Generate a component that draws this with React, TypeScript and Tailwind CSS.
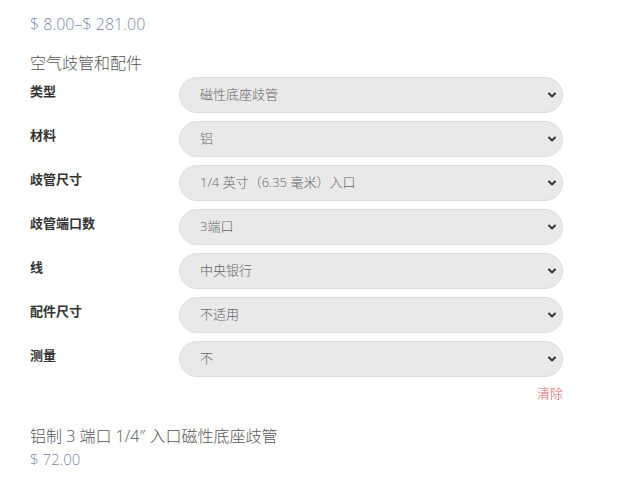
import React from 'react';

const font = { fontFamily: '"Open Sans", "Noto Sans CJK SC", sans-serif' };

const rows = [
  { label: '类型', value: '磁性底座歧管' },
  { label: '材料', value: '铝' },
  { label: '歧管尺寸', value: '1/4 英寸（6.35 毫米）入口' },
  { label: '歧管端口数', value: '3端口' },
  { label: '线', value: '中央银行' },
  { label: '配件尺寸', value: '不适用' },
  { label: '测量', value: '不' },
];

const Chevron = () => (
  <svg
    className="pointer-events-none absolute right-[6px] top-1/2 -translate-y-1/2"
    width="10"
    height="10"
    viewBox="0 0 10 10"
  >
    <path d="M2 3.5 L5 6.5 L8 3.5" fill="none" stroke="#333" strokeWidth="2" strokeLinecap="round" strokeLinejoin="round" />
  </svg>
);

const VariationRow = ({ label, value }: { label: string; value: string }) => (
  <div className="flex items-start">
    <div className="w-[149px] pt-[5px] text-[13px] font-bold leading-[18px] text-[#333]">{label}</div>
    <div className="relative w-[384px]">
      <select
        defaultValue={value}
        style={font}
        className="h-[36px] w-full appearance-none rounded-full border border-[#dcdcdc] bg-[#e9e9e9] pl-[20px] pr-[30px] text-[13px] font-light text-[#666] outline-none"
      >
        <option value={value}>{value}</option>
      </select>
      <Chevron />
    </div>
  </div>
);

export default function App() {
  return (
    <div style={font} className="min-h-[481px] w-[623px] bg-white pl-[30px] pt-[13px]">
      <div className="text-[16px] font-light leading-[22px] text-[#7a87a6]">$ 8.00–$ 281.00</div>
      <div className="mt-[18px] text-[16px] font-light leading-[20px] text-[#555]">空气歧管和配件</div>
      <div className="mt-[4px] flex flex-col gap-[8px]">
        {rows.map((r) => (
          <VariationRow key={r.label} label={r.label} value={r.value} />
        ))}
      </div>
      <div className="flex w-[533px] justify-end pt-[7px]">
        <span className="text-[13px] font-light leading-[18px] text-[#dd5a58]">清除</span>
      </div>
      <div className="mt-[23px] text-[16px] font-light leading-[22px] text-[#555]">铝制 3 端口 1/4″ 入口磁性底座歧管</div>
      <div className="mt-[2px] text-[15px] font-light leading-[20px] text-[#7a87a6]">$ 72.00</div>
    </div>
  );
}
